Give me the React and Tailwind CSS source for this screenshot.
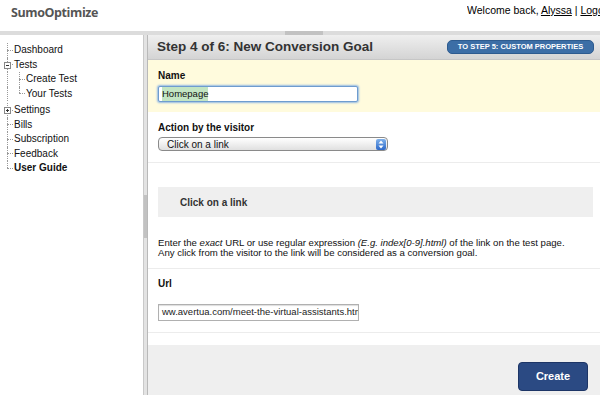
import React from 'react';

function TreeRow({ label, level = 0, last = false, toggle, bold = false, extraTop = false }) {
  return (
    <li className={`flex h-[14.5px] ${extraTop ? 'mt-[2px]' : ''}`}>
      {level > 0 && <div className="w-[12px] shrink-0 border-l border-dotted border-[#999]" />}
      <div className="relative w-[6px] shrink-0 flex flex-col">
        <div className="flex-1 border-l border-dotted border-[#999]" />
        <div className={`flex-1 border-t border-dotted border-[#999] ${last ? '' : 'border-l'}`} />
        {toggle && (
          <span className="absolute left-[-3px] top-[4px] w-[7px] h-[7px] bg-white border border-[#888] flex items-center justify-center">
            <span className="relative w-[3px] h-[1px] bg-[#333]">
              {toggle === 'plus' && <span className="absolute left-[1px] top-[-1px] w-[1px] h-[3px] bg-[#333]" />}
            </span>
          </span>
        )}
      </div>
      <span className={`pl-[1px] text-[10px] leading-[14.5px] whitespace-nowrap text-[#111] ${bold ? 'font-bold' : ''}`}>
        {label}
      </span>
    </li>
  );
}

function SelectArrows() {
  return (
    <div className="w-[10px] h-[11px] rounded-[2px] bg-gradient-to-b from-[#7fb0ea] to-[#2c68c8] flex items-center justify-center">
      <svg width="6" height="9" viewBox="0 0 6 9">
        <path d="M3 0.5 L5.5 3.5 L0.5 3.5 Z" fill="#fff" />
        <path d="M3 8.5 L5.5 5.5 L0.5 5.5 Z" fill="#fff" />
      </svg>
    </div>
  );
}

export default function App() {
  return (
    <div className="w-[600px] h-[395px] overflow-hidden bg-white font-['Liberation_Sans',Arial,sans-serif] text-[#111] flex flex-col">
      <header className="h-[31px] shrink-0 flex justify-between items-start">
        <div className="pl-[11px] pt-[4px] font-['Open_Sans',sans-serif] font-bold text-[12.5px] tracking-[-0.4px] text-[#555]">
          SumoOptimize
        </div>
        <div className="w-[133px] pt-[3px] whitespace-nowrap overflow-hidden text-[10.5px] text-black">
          Welcome back, <a className="underline">Alyssa</a> | <a className="underline">Logout</a>
        </div>
      </header>

      <div className="h-[4px] shrink-0 bg-[#dcdcdc] flex">
        <div className="ml-[285px] w-[38px] bg-[#c2c2c2]" />
      </div>

      <div className="flex flex-1 min-h-0 bg-[#e3e3e3]">
        <aside className="w-[144px] shrink-0 bg-white border-r border-[#c9c9c9] pt-[8px] pl-[7px]">
          <ul>
            <TreeRow label="Dashboard" />
            <TreeRow label="Tests" toggle="minus" />
            <TreeRow label="Create Test" level={1} />
            <TreeRow label="Your Tests" level={1} last />
            <TreeRow label="Settings" toggle="plus" extraTop />
            <TreeRow label="Bills" />
            <TreeRow label="Subscription" />
            <TreeRow label="Feedback" />
            <TreeRow label="User Guide" bold last />
          </ul>
        </aside>

        <div className="w-[3px] shrink-0 flex flex-col">
          <div className="h-[160px]" />
          <div className="h-[43px] bg-[#c2c2c2]" />
        </div>

        <main className="flex-1 min-w-0 border-l border-[#b9b9b9] bg-white flex flex-col">
          <div className="h-[25px] shrink-0 bg-gradient-to-b from-[#efefef] to-[#d4d4d4] border-b border-[#c6c6c6] flex items-center justify-between pl-[9px] pr-[6px]">
            <h2 className="text-[13.5px] font-bold text-[#333] whitespace-nowrap">Step 4 of 6: New Conversion Goal</h2>
            <button className="w-[147px] h-[14px] rounded-[5px] bg-[#3c6ea6] border border-[#2d5b8f] text-white text-[7.5px] font-bold whitespace-nowrap flex items-center justify-center">
              TO STEP 5: CUSTOM PROPERTIES
            </button>
          </div>

          <section className="h-[52px] shrink-0 bg-[#fffbdd] px-[10px] pt-[10px]">
            <div className="text-[10px] leading-[12px] font-bold">Name</div>
            <div className="mt-[4px] w-[200px] h-[16px] border border-[#6e9ccf] rounded-[2px] shadow-[0_0_2px_1px_#93b9e3] bg-white px-[3px] flex items-center text-[9.5px]">
              <span className="bg-[#c3e5c3]">Homepage</span>
            </div>
          </section>

          <section className="h-[51px] shrink-0 border-b border-[#ececec] px-[10px] pt-[9.5px]">
            <div className="text-[10px] leading-[12px] font-bold">Action by the visitor</div>
            <div className="mt-[3.5px] w-[230px] h-[14px] rounded-[4px] border border-[#8a8a8a] bg-gradient-to-b from-white to-[#e0e0e0] flex items-center pl-[8px] pr-[1px] text-[10px]">
              <span>Click on a link</span>
              <div className="ml-auto">
                <SelectArrows />
              </div>
            </div>
          </section>

          <div className="mt-[24px] ml-[10px] mr-[7px] h-[30px] shrink-0 bg-[#efefef] flex items-center pl-[22px] text-[10px] font-bold text-[#333]">
            Click on a link
          </div>

          <p className="shrink-0 mt-[21px] pb-[10px] px-[10px] border-b border-[#ececec] text-[9.6px] leading-[10px] text-[#111]">
            Enter the <i>exact</i> URL or use regular expression <i>(E.g. index[0-9].html)</i> of the link on the test page.
            <br />
            Any click from the visitor to the link will be considered as a conversion goal.
          </p>

          <section className="shrink-0 border-b border-[#ececec] px-[10px] pt-[9px] pb-[11px]">
            <div className="text-[10px] leading-[12px] font-bold">Url</div>
            <div className="mt-[14px] w-[201px] h-[17px] border border-[#b0b0b0] shadow-[inset_0_1px_1px_#ddd] bg-white px-[3px] flex items-center overflow-hidden whitespace-nowrap text-[9.5px] text-[#222]">
              ww.avertua.com/meet-the-virtual-assistants.html
            </div>
          </section>

          <div className="h-[12px] shrink-0" />

          <footer className="flex-1 bg-[#efefef] flex justify-end items-start pt-[17px] pr-[12px]">
            <button className="w-[70px] h-[29px] rounded-[4px] bg-[#2b4a83] border border-[#1d3566] text-white font-bold text-[11px]">
              Create
            </button>
          </footer>
        </main>
      </div>
    </div>
  );
}
